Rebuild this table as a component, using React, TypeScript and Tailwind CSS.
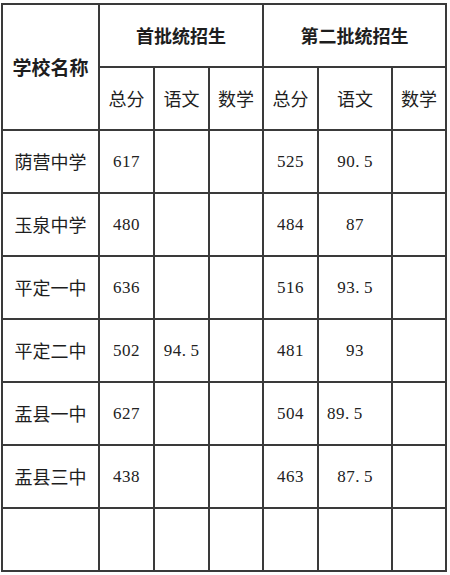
import React from 'react';

// 各校录取分数线
type Row = {
  name: string;
  first: [string, string, string];
  second: [string, string, string];
  leftChinese2?: boolean;
};

const rows: Row[] = [
  { name: '荫营中学', first: ['617', '', ''], second: ['525', '90.5', ''] },
  { name: '玉泉中学', first: ['480', '', ''], second: ['484', '87', ''] },
  { name: '平定一中', first: ['636', '', ''], second: ['516', '93.5', ''] },
  { name: '平定二中', first: ['502', '94.5', ''], second: ['481', '93', ''] },
  { name: '盂县一中', first: ['627', '', ''], second: ['504', '89.5', ''], leftChinese2: true },
  { name: '盂县三中', first: ['438', '', ''], second: ['463', '87.5', ''] },
  { name: '', first: ['', '', ''], second: ['', '', ''] },
];

const cjk = { fontFamily: '"Noto Sans CJK SC", "Noto Sans", sans-serif' };
const num = { fontFamily: '"Liberation Serif", "DejaVu Serif", serif' };

const Cell: React.FC<{ children?: React.ReactNode; className?: string }> = ({ children, className = '' }) => (
  <div className={`bg-white flex items-center justify-center ${className}`}>{children}</div>
);

// 小数点后留一点空隙，像宋体里那样
const Num: React.FC<{ v: string }> = ({ v }) => {
  if (!v.includes('.')) return <span style={num}>{v}</span>;
  const [a, b] = v.split('.');
  return (
    <span style={num}>
      {a}
      <span className="mr-[4px]">.</span>
      {b}
    </span>
  );
};

export default function App() {
  return (
    <div className="w-[450px] h-[575px] bg-white pt-[3px] pl-[1px]">
      <div
        className="w-[446px] grid bg-[#3a3a3a] p-[2px] gap-[2px] grid-cols-[95px_53px_53px_52px_53px_72px_52px] auto-rows-[61px] text-[#1e1e1e]"
        style={cjk}
      >
        <Cell className="row-span-2 text-[19px] font-bold">学校名称</Cell>
        <Cell className="col-span-3 text-[18px] font-bold">首批统招生</Cell>
        <Cell className="col-span-3 text-[18px] font-bold">第二批统招生</Cell>
        {['总分', '语文', '数学', '总分', '语文', '数学'].map((t, i) => (
          <Cell key={i} className="text-[18px]">{t}</Cell>
        ))}
        {rows.map((r, i) => (
          <React.Fragment key={i}>
            <Cell className="text-[18px]">{r.name}</Cell>
            {r.first.map((v, j) => (
              <Cell key={'a' + j} className="text-[17px] text-[#222] tracking-[0.5px]">
                <Num v={v} />
              </Cell>
            ))}
            {r.second.map((v, j) => (
              <Cell
                key={'b' + j}
                className={`text-[17px] text-[#222] tracking-[0.5px] ${j === 1 && r.leftChinese2 ? 'justify-start pl-[8px]' : ''}`}
              >
                <Num v={v} />
              </Cell>
            ))}
          </React.Fragment>
        ))}
      </div>
    </div>
  );
}
